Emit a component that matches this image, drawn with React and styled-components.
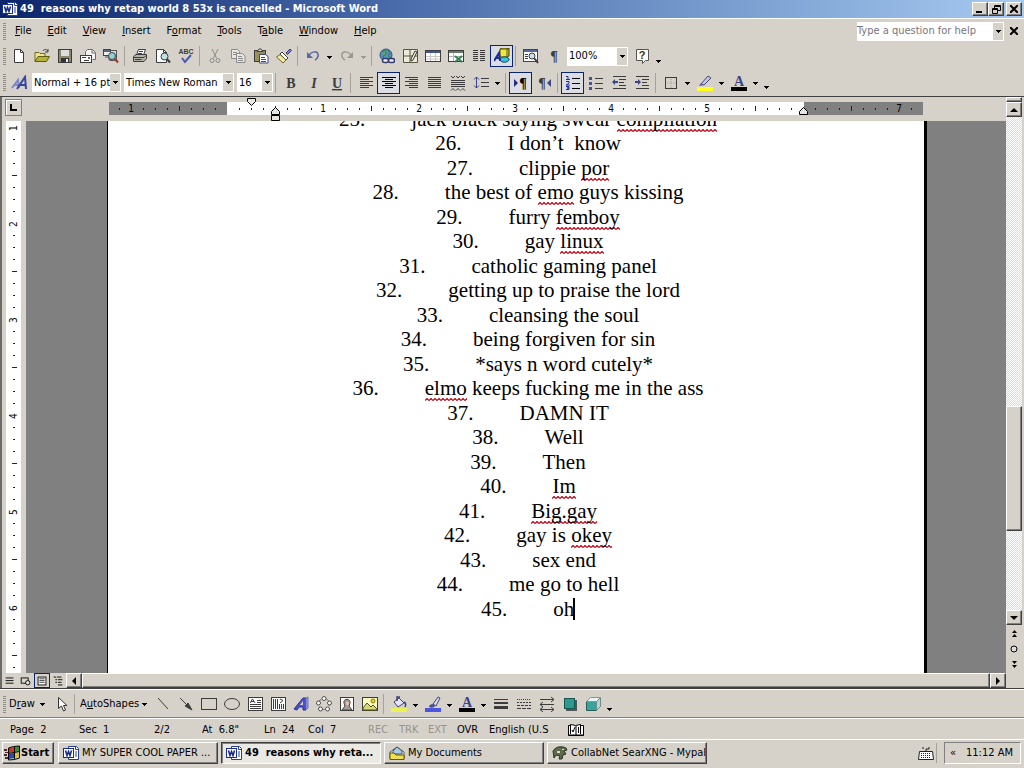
import React from "react";
import styled, { createGlobalStyle, css } from "styled-components";

const C = {
  face: "#d6d2ca",
  light: "#ffffff",
  shadow: "#808080",
  dark: "#404040",
  navy: "#0a246a",
};

const ui = `"DejaVu Sans Condensed", "Noto Sans", sans-serif`;

const Global = createGlobalStyle`
  * { box-sizing: border-box; }
  body { margin: 0; background: ${C.face}; }
  button, input, select { font: inherit; color: inherit; margin: 0; }
`;

const raised = css`
  border: 1px solid;
  border-color: ${C.light} ${C.dark} ${C.dark} ${C.light};
  box-shadow: inset -1px -1px 0 ${C.shadow};
`;

const Desktop = styled.div`
  height: 100vh;
  display: flex;
  flex-direction: column;
  background: ${C.face};
  color: #000;
  font: 11px/14px ${ui};
  overflow: hidden;
`;

const TitleBar = styled.header`
  display: flex;
  align-items: center;
  flex: none;
  height: 18px;
  padding: 0 2px;
  background: linear-gradient(90deg, #0a246a, #4466a6 35%, #7094c8 65%, #a6caf0);
  color: #fff;
`;

const Title = styled.h1`
  flex: 1;
  margin: 0 0 0 2px;
  font: bold 11px/16px ${ui};
  white-space: pre;
`;

const Caption = styled.button`
  ${raised}
  display: grid;
  place-items: center;
  width: 16px;
  height: 14px;
  margin-left: ${(p) => (p.$gap ? 2 : 0)}px;
  padding: 0;
  background: ${C.face};
`;

const Bar = styled.div`
  display: flex;
  align-items: center;
  flex: none;
  height: ${(p) => p.$h}px;
  padding: 0 2px;
  border-top: ${(p) => (p.$line ? "1px solid #fff" : "none")};
`;

const Grip = styled.span`
  flex: none;
  width: 3px;
  height: 17px;
  margin: 0 1px;
  background: repeating-linear-gradient(#8f8c84 0 1px, transparent 1px 2px);
`;

const MenuNav = styled.nav`
  display: flex;
  flex: 1;
`;

const MenuItem = styled.button`
  padding: 2px 8px;
  border: 0;
  background: none;
  white-space: nowrap;
`;

const CloseDocument = styled.button`
  display: grid;
  place-items: center;
  flex: none;
  width: 16px;
  height: 16px;
  padding: 0;
  border: 0;
  background: none;
`;

const Key = styled.span`
  text-decoration: underline;
  text-underline-offset: 1px;
`;

const Tool = styled.button`
  display: grid;
  place-items: center;
  flex: none;
  width: 23px;
  height: 22px;
  padding: 0;
  border: 1px solid ${(p) => (p.$on ? C.navy : "transparent")};
  background: ${(p) => (p.$on ? "#dcdce4" : "none")};
`;

const Arrow = styled.button`
  display: grid;
  place-items: center;
  flex: none;
  width: 11px;
  height: 22px;
  padding: ${(p) => (p.$low ? "10px 0 0" : "2px 0 0")};
  border: 0;
  background: none;
`;

const Sep = styled.span`
  flex: none;
  width: 1px;
  height: 20px;
  margin: 0 3px 0 2px;
  background: #a6a29a;
`;

const ComboBox = styled.span`
  display: flex;
  flex: none;
  position: relative;
  width: ${(p) => p.$w}px;
  height: 19px;
  margin: 0 ${(p) => p.$after || 0}px 0 ${(p) => p.$before || 0}px;
  background: #fff;
`;

const Select = styled.select`
  flex: 1;
  min-width: 0;
  padding: 0 8px 0 2px;
  border: 0;
  background: none;
  appearance: none;
  white-space: nowrap;
`;

const HelpInput = styled.input`
  flex: 1;
  min-width: 0;
  padding: 0;
  border: 0;
  background: none;
  &::placeholder { color: #77757c; opacity: 1; }
`;

const ComboArrow = styled.span`
  position: absolute;
  right: 1px;
  top: 1px;
  bottom: 1px;
  display: grid;
  place-items: center;
  width: 10px;
  background: ${C.face};
  pointer-events: none;
`;

const Workspace = styled.main`
  display: flex;
  flex: 1;
  min-height: 0;
  border-top: 1px solid ${C.dark};
  border-bottom: 1px solid ${C.dark};
`;

const Pane = styled.div`
  display: flex;
  flex-direction: column;
  flex: 1;
  min-width: 0;
  border-left: 2px solid #6c6a66;
`;

const RulerRow = styled.div`
  display: flex;
  flex: none;
  height: 24px;
`;

const TabCorner = styled.button`
  flex: none;
  width: 17px;
  height: 17px;
  margin: 2px 4px 0 3px;
  padding: 0;
  border: 1px solid ${C.shadow};
  box-shadow: inset 1px 1px 0 #fff;
  background: ${C.face};
`;

const RulerArea = styled.div`
  display: flex;
  justify-content: center;
  flex: 1;
  min-width: 0;
`;

const Ruler = styled.div`
  position: relative;
  display: flex;
  align-items: center;
  flex: none;
  width: 814px;
  height: 13px;
  margin-top: 5px;
  padding-left: 4px;
  background: linear-gradient(90deg, #808080 118px, #fff 118px 695px, #808080 695px);
`;

const VRuler = styled.div`
  display: flex;
  flex-direction: column;
  flex: none;
  width: 15px;
  margin: 0 5px 0 4px;
  padding-top: 1px;
  overflow: hidden;
  background: #fff;
`;

const Cell = styled.span`
  display: grid;
  place-items: center;
  flex: none;
  width: 12px;
  height: 12px;
  font-size: 10px;
  line-height: 12px;
  transform: ${(p) => (p.$v ? "rotate(-90deg)" : "none")};
  ${(p) => p.$v && "align-self: center;"}
  &::before {
    content: "";
    display: ${(p) => (p.$tick ? "block" : "none")};
    width: 1px;
    height: ${(p) => (p.$tick === "long" ? 5 : 2)}px;
    background: #222;
  }
`;

const Marker = styled.svg`
  position: absolute;
  left: ${(p) => p.$x}px;
  top: ${(p) => p.$y}px;
`;

const DocRow = styled.div`
  display: flex;
  flex: 1;
  min-height: 0;
`;

const Canvas = styled.div`
  display: flex;
  justify-content: center;
  flex: 1;
  min-width: 0;
  padding-left: 2px;
  overflow: hidden;
  background: #808080;
`;

const Page = styled.article`
  flex: none;
  width: 820px;
  border-left: 1px solid #000;
  border-right: 3px solid #000;
  background: #fff;
  overflow: hidden;
`;

const Reasons = styled.ol`
  margin: -14px 120px 0 144px;
  padding: 0;
  list-style: none;
  font: 21px/24px "Liberation Serif", "Times New Roman", serif;
`;

const Reason = styled.li`
  display: flex;
  justify-content: center;
  gap: 46px;
  height: 24px;
  white-space: pre;
  &:nth-child(even) { height: 25px; }
`;

const Misspelt = styled.span`
  padding-bottom: 1px;
  background: url("data:image/svg+xml,%3Csvg xmlns='http://www.w3.org/2000/svg' width='4' height='3'%3E%3Cpath d='M0 2.5 2 .5 4 2.5' fill='none' stroke='%23c00010' stroke-width='1.2'/%3E%3C/svg%3E") repeat-x left bottom;
`;

const Caret = styled.span`
  display: inline-block;
  width: 2px;
  height: 22px;
  margin-left: -1px;
  vertical-align: -4px;
  background: #000;
`;

const HScroll = styled.div`
  display: flex;
  align-items: center;
  flex: none;
  height: 15px;
`;

const View = styled.button`
  display: grid;
  place-items: center;
  flex: none;
  width: 16px;
  height: 15px;
  padding: 0;
  border: 1px solid ${(p) => (p.$on ? C.navy : "transparent")};
  background: none;
`;

const ScrollButton = styled.button`
  ${raised}
  display: grid;
  place-items: center;
  flex: none;
  width: 16px;
  height: 15px;
  padding: 0;
  background: ${C.face};
`;

const HThumb = styled.div`
  ${raised}
  flex: 1;
  height: 15px;
`;

const VScroll = styled.div`
  display: flex;
  flex-direction: column;
  flex: none;
  width: 18px;
  padding-right: 2px;
`;

const SplitBox = styled.div`
  ${raised}
  flex: none;
  height: 5px;
`;

const VTrack = styled.div`
  display: flex;
  flex-direction: column;
  flex: 1;
  background: repeating-conic-gradient(#fff 0 25%, #dedbd4 0 50%) 0 0 / 2px 2px;
`;

const Space = styled.div`
  flex: ${(p) => p.$n};
`;

const VThumb = styled.div`
  ${raised}
  flex: 123;
  background: ${C.face};
`;

const Browse = styled.button`
  display: grid;
  place-items: center;
  flex: none;
  height: 16px;
  padding: 0;
  border: 0;
  background: none;
`;

const BrowseGroup = styled.div`
  display: flex;
  flex-direction: column;
  flex: none;
  height: 63px;
`;

const DrawMenu = styled.button`
  display: flex;
  align-items: center;
  justify-content: space-between;
  flex: none;
  width: ${(p) => p.$w}px;
  height: 22px;
  padding: 0 4px 0 2px;
  border: 0;
  background: none;
  white-space: nowrap;
`;

const Status = styled.footer`
  display: flex;
  align-items: center;
  flex: none;
  height: 21px;
  padding: 1px 0 0 10px;
  border-top: 1px solid #fff;
  box-shadow: 0 -1px 0 ${C.shadow};
`;

const Field = styled.span`
  flex: none;
  width: ${(p) => p.$w}px;
  color: ${(p) => (p.$off ? "#96938c" : "#000")};
  white-space: pre;
  overflow: hidden;
`;

const Taskbar = styled.footer`
  display: flex;
  align-items: center;
  flex: none;
  height: 29px;
  padding: 0 3px 2px 2px;
  border-top: 1px solid #fff;
`;

const Start = styled.button`
  ${raised}
  display: flex;
  align-items: center;
  gap: 1px;
  flex: none;
  width: 52px;
  height: 22px;
  margin-right: 4px;
  padding: 0 0 0 1px;
  background: ${C.face};
  font-weight: bold;
`;

const Task = styled.button`
  ${raised}
  display: flex;
  align-items: center;
  gap: 3px;
  flex: 0 1 160px;
  min-width: 0;
  height: 22px;
  margin-right: 3px;
  padding: 0 0 0 4px;
  background: ${C.face};
  white-space: pre;
  ${(p) =>
    p.$on &&
    css`
      border-color: ${C.dark} #fff #fff ${C.dark};
      box-shadow: inset 1px 1px 0 ${C.shadow};
      background: #ebe9e4;
      font-weight: bold;
    `}
`;

const TaskText = styled.span`
  overflow: hidden;
  white-space: pre;
`;

const Tray = styled.div`
  display: flex;
  align-items: center;
  justify-content: space-between;
  flex: none;
  width: 77px;
  height: 22px;
  margin-left: 4px;
  padding: 0 7px 0 5px;
  border: 1px solid;
  border-color: ${C.shadow} #fff #fff ${C.shadow};
`;

const Fill = styled.span`
  flex: 1;
`;

const Down = ({ c = "#000" }) => (
  <svg width="5" height="3" aria-hidden="true" shapeRendering="crispEdges">
    <path d="M0 0h5v1h-1v1h-1v1h-1v-1h-1v-1h-1z" fill={c} />
  </svg>
);

const Cross = () => (
  <svg width="8" height="8" stroke="#000" strokeWidth="2" aria-hidden="true">
    <path d="m0 0 8 8M8 0 0 8" />
  </svg>
);

const Tri = ({ d }) => (
  <svg width="8" height="8" aria-hidden="true">
    <path d={{ up: "M0 6 4 2 8 6z", down: "M0 2h8L4 6z", left: "M6 0v8L2 4z", right: "M2 0v8l4-4z" }[d]} />
  </svg>
);

const K = "#3c3c3c";
const lines = (rows, c = K) => (
  <path d={rows.map(([x, y, w]) => `M${x} ${y}.5h${w}`).join("")} stroke={c} />
);
const serif = { fontFamily: "Liberation Serif, serif", fontWeight: 700 };
const glyph = (t, extra = {}) => (
  <text x="8" y="13" textAnchor="middle" fontSize="14" fill={K} style={{ ...serif, ...extra }}>{t}</text>
);

const art = {
  word: <><path d="M5.500 1.500h8l2 2v11h-10z" fill="#fff" stroke="#26408f" /><path d="M12.500 1.500v3h3M12 7h2M12 9h2M12 11h2" stroke="#26408f" fill="none" /><rect x="0.500" y="3.500" width="10" height="9" fill="#fff" stroke="#1a2c8c" /><path d="M2.500 5.500 4 10.500 5.500 6.500 7 10.500 8.500 5.500" fill="none" stroke="#1a2c8c" strokeWidth="1.600" /></>,
  new: <><path d="M3.500 1.500h6l3 3v10h-9z" fill="#fff" stroke={K} /><path d="M9.500 1.500v3h3" fill="none" stroke={K} /></>,
  open: <><path d="M1 13.500V4.500h4l1 1h5v3" fill="#f0e68c" stroke="#6b6b18" /><path d="M1 13.500 4 8.500h11.500l-3 5z" fill="#b5b23a" stroke="#5c5c12" /><path d="M9 3c1-2 3-2 5 0m0-2v3h-3" fill="none" stroke={K} /></>,
  save: <><rect x="1.500" y="1.500" width="13" height="13" fill="#8a8a6a" stroke={K} /><rect x="4" y="2" width="8" height="6" fill="#dedede" /><rect x="4" y="10" width="8" height="4" fill="#333" /><rect x="9" y="11" width="2" height="3" fill="#eee" /></>,
  mail: <><path d="M5.500 7.500v-4l2-2h5l3 3v7h-3" fill="#f4f4f4" stroke="#6c6c6c" /><path d="M12 2v3h3" fill="none" stroke="#6c6c6c" /><rect x="0.500" y="7.500" width="11" height="7" fill="#fff" stroke={K} />{lines([[2, 9, 4], [4, 12, 5]])}<rect x="8" y="9" width="2" height="2" fill="#666" /></>,
  search: <><rect x="0.500" y="1.500" width="7" height="6" fill="#eee" stroke="#444" /><path d="M1 2h6v2H1z" fill="#567" /><rect x="7.500" y="2.500" width="6" height="10" fill="#cdd" stroke="#555" /><path d="M2 9h4v3h3" fill="none" stroke="#555" /><circle cx="9" cy="8" r="3.500" fill="#8fd0d4" stroke="#444" /><path d="m11.500 10.500 3.500 4" stroke="#b03030" strokeWidth="2" /></>,
  print: <><path d="M4.500 7 6.500 1.500h7L11.500 7" fill="#fff" stroke={K} />{lines([[7, 3, 4], [6, 5, 4]])}<path d="M1.500 8.500 4 6.500h10.500v4l-2.500 3H1.500z" fill="#b4b2aa" stroke={K} /><path d="M2 9.500h10l2-2M3 11.500h7" fill="none" stroke={K} /><path d="M9 11h2v1H9z" fill="#9a9a20" /></>,
  preview: <><path d="M1.500 1.500h7l3 3v10h-10z" fill="#fff" stroke={K} /><path d="M8.500 1.500v3h3" fill="none" stroke={K} /><circle cx="9.500" cy="8.500" r="3.500" fill="#bfe0e4" stroke={K} /><path d="m12 11 3 3.500" stroke={K} strokeWidth="2" /></>,
  spell: <><text x="8" y="6" fontSize="7" textAnchor="middle" fill={K} fontFamily="Liberation Sans, sans-serif" fontWeight="700">ABC</text><path d="m4 10 3 4 6-7" fill="none" stroke="#4a58b0" strokeWidth="2" /></>,
  cut: <g fill="none" stroke="#8b8b8b"><path d="m5 1 4.500 9M11 1 6.500 10" /><circle cx="5" cy="12.500" r="2" /><circle cx="11" cy="12.500" r="2" /></g>,
  copy: <g fill="#e8e6e0" stroke="#8b8b8b"><path d="M1.500 1.500h6l2 2v7h-8z" /><path d="M6.500 5.500h6l2.500 2.500v6.500H6.500z" />{lines([[3, 4, 4], [3, 6, 3], [8, 8, 4], [8, 10, 5], [8, 12, 5]], "#8b8b8b")}</g>,
  paste: <><rect x="1.500" y="2.500" width="11" height="11" fill="#98925a" stroke={K} /><path d="M4 3.500 6 1h2l2 2.500z" fill="#ddd" stroke={K} /><path d="M6.500 6.500h6l2.500 2v6.500H6.500z" fill="#fff" stroke="#3a4684" />{lines([[8, 9, 4], [8, 11, 5], [8, 13, 5]], "#3a4684")}</>,
  brush: <><path d="m10 5 4-4 1.500 1.500-4 4z" fill="#7b7be0" stroke="#3a3a6a" /><path d="m6 4 6 6-2 2-6-6z" fill="#fff" stroke={K} /><path d="M4 6.500 10 12 7 15 .5 9z" fill="#f2e9a8" stroke="#6e6420" /></>,
  undo: <><path d="M4 7c3-4 8-4 9-1 1 2-1 5-3 6" fill="none" stroke="#5a66a6" strokeWidth="1.500" /><path d="M2 4v6h6z" fill="#5a66a6" /></>,
  redo: <><path d="M12 7C9 3 4 3 3 6c-1 2 1 5 3 6" fill="none" stroke="#9a9892" strokeWidth="1.500" /><path d="M14 4v6H8z" fill="#9a9892" /></>,
  link: <><circle cx="7" cy="7" r="6" fill="#5a8fc4" stroke="#34507c" /><path d="M3 4c3-3 5 0 4 2s-3 1-3 3l2 3M9 2l2 3-2 3 3 2" fill="#58a868" stroke="#2f7a48" /><rect x="3.500" y="10.500" width="6" height="4" rx="2" fill="#eee" stroke="#333a70" strokeWidth="1.500" /><rect x="9.500" y="10.500" width="6" height="4" rx="2" fill="#eee" stroke="#333a70" strokeWidth="1.500" /></>,
  borders: <><path d="M1.500 1.500h14v13h-14zM1 8h14M8 2v12" fill="#ecead8" stroke="#55553c" /><path d="m9 11 4-8 2 1-4 8-2 1z" fill="#f4f0d0" stroke="#333" /></>,
  table: <><rect x="0.500" y="2.500" width="15" height="11" fill="#fff" stroke={K} /><path d="M1 3h14v2H1z" fill="#3c55a0" /><path d="M1 8.500h14M1 11h14M5.500 5v8M10.500 5v8" stroke="#c8c8c8" /></>,
  excel: <><rect x="0.500" y="2.500" width="15" height="11" fill="#fff" stroke={K} /><path d="M1 3h14v2H1z" fill="#687a68" /><path d="M1 8.500h14M5.500 5v8" stroke="#b4b4b4" /><path d="m7 8 7 6M14 8l-7 6" stroke="#2f8050" strokeWidth="2" /></>,
  columns: lines([[2, 2, 5], [9, 2, 5], [2, 4, 5], [9, 4, 5], [2, 6, 5], [9, 6, 5], [2, 8, 5], [9, 8, 5], [2, 10, 5], [9, 10, 5], [2, 12, 5], [9, 12, 5]]),
  drawing: <><path d="M6 1h7v8H6z" fill="#f0e840" stroke="#4c4c10" /><path d="M6 1 8 0h7l-2 1M13 1l2-1v8l-2 1" fill="#a8a020" stroke="#4c4c10" /><path d="M6 12c0-4 8-4 9-1s-7 5-9 1z" fill="#38c4cc" stroke="#146" /><path d="m0 13 5-8 1 8M2 10h4" fill="none" stroke="#1c2c9c" strokeWidth="2" /></>,
  docmap: <><rect x="0.500" y="1.500" width="14" height="12" fill="#fff" stroke="#35407c" /><path d="M1 2h13v2H1z" fill="#58689c" />{lines([[2, 6, 3], [2, 8, 3], [2, 10, 3]])}<circle cx="9" cy="8" r="3" fill="#cde" stroke={K} /><path d="m11 10 4 5" stroke={K} strokeWidth="2" /></>,
  pilcrow: glyph("¶"),
  help: <><path d="M2.500 1.500h12v11h-3l-3 3v-3h-6z" fill="#fffff0" stroke="#555" /><text x="8" y="11" textAnchor="middle" fontSize="11" fontWeight="700" fill="#333" fontFamily="Liberation Sans, sans-serif">?</text></>,
  styles: <g fill="none" strokeWidth="2"><path d="m1 13 6-8 1 8M4 10h4" stroke="#7a86c8" /><path d="m6 14 8-12 1 12M9 10h6" stroke="#3643a0" /></g>,
  bold: glyph("B"),
  italic: glyph("I", { fontStyle: "italic" }),
  underline: glyph("U", { textDecoration: "underline" }),
  left: lines([[2, 2, 13], [2, 4, 9], [2, 6, 13], [2, 8, 9], [2, 10, 13], [2, 12, 9]]),
  center: lines([[1, 2, 14], [4, 4, 8], [1, 6, 14], [4, 8, 8], [1, 10, 14], [4, 12, 8]], "#000"),
  right: lines([[1, 2, 13], [5, 4, 9], [1, 6, 13], [5, 8, 9], [1, 10, 13], [5, 12, 9]]),
  justify: lines([[1, 2, 13], [1, 4, 13], [1, 6, 13], [1, 8, 13], [1, 10, 13], [1, 12, 13]]),
  distribute: <>{lines([[1, 5, 14], [1, 7, 14], [1, 9, 14], [1, 11, 14]])}<path d="m1 1 2 2 2-2m1 0 2 2 2-2m1 0 2 2 2-2M1 15.500l2-2 2 2m1 0 2-2 2 2m1 0 2-2 2 2" fill="none" stroke={K} /></>,
  spacing: <>{lines([[8, 3, 8], [8, 7, 8], [8, 11, 8]])}<path d="M3.500 2v11M1 4.500 3.500 2 6 4.500M1 10.500 3.500 13 6 10.500" fill="none" stroke="#3a4684" /></>,
  ltr: <><path d="m1 4 4 4-4 4z" fill="#1c2c80" /><text x="10" y="13" textAnchor="middle" fontSize="14" style={serif}>¶</text></>,
  rtl: <><path d="m15 4-4 4 4 4z" fill="#3a4684" /><text x="6" y="13" textAnchor="middle" fontSize="14" fill={K} style={serif}>¶</text></>,
  numbering: <>{lines([[7, 3, 8], [7, 8, 8], [7, 13, 8]], "#000")}<path d="M1 1.500h2v3M1 4.500h4M1 6.500h3v1.500L1 10h4M1 11.500h3v1.500H2h2v1.500H1" fill="none" stroke="#1c2c9c" /></>,
  bullets: <>{lines([[7, 3, 8], [7, 8, 8], [7, 13, 8]])}<path d="M1 2h3v3H1zM1 7h3v3H1zM1 12h3v3H1z" fill="#4450a0" /></>,
  outdent: <>{lines([[2, 1, 13], [8, 4, 7], [8, 7, 5], [8, 10, 7], [2, 13, 13]])}<path d="M1 7 4 4v2h3v2H4v2z" fill="#3a4684" /></>,
  indent: <>{lines([[2, 1, 13], [8, 4, 7], [8, 7, 5], [8, 10, 7], [2, 13, 13]])}<path d="M7 7 4 4v2H1v2h3v2z" fill="#3a4684" /></>,
  border: <><rect x="2.500" y="2.500" width="11" height="11" fill="none" stroke={K} /><path d="M8 4v9M4 8h9" stroke="#a4a29c" strokeDasharray="1 1" /></>,
  highlight: <><path d="m4 9 7-8 3 2-7 7z" fill="#c4c8e8" stroke="#44486a" /><path d="m4 8-2 3 5-1z" fill="#555a9c" /><path d="M0 12h16v4H0z" fill="#ffff20" /></>,
  fontColor: <><text x="8" y="11" textAnchor="middle" fontSize="14" fill="#3b4487" style={serif}>A</text><path d="M0 12h16v4H0z" /></>,
  pointer: <path d="M5.500 1.500v11l3-2.500 2 5 2-1-2-4.500h3.500z" fill="#fff" stroke="#333" />,
  line: <path d="m3 2 10 11" stroke={K} />,
  arrow: <path d="m2 2 8 8M14 14 7 10l3-3z" fill={K} stroke={K} />,
  rect: <rect x="0.500" y="2.500" width="15" height="11" fill="none" stroke={K} />,
  oval: <ellipse cx="8" cy="8" rx="7.500" ry="5.500" fill="none" stroke={K} />,
  textbox: <><rect x="1.500" y="1.500" width="14" height="13" fill="#fff" stroke={K} />{lines([[10, 4, 4], [10, 6, 4], [3, 8, 11], [3, 10, 11], [3, 12, 11]])}<path d="m3 7 2.500-4L8 7M4 5.500h3" fill="none" stroke={K} /></>,
  vtext: <><rect x="1.500" y="1.500" width="14" height="13" fill="#fff" stroke={K} /><path d="M3.500 3v10M5.500 3v10M7.500 3v10M9.500 8v5M11.500 8v5M13.500 8v5M10 3l3 1.500L10 7" fill="none" stroke={K} /></>,
  wordart: <><path d="m1 13 9-11h3v12h-3v-3H6l-2 3z" fill="#4a50c8" stroke="#2c3190" /><path d="M7 9h3V5z" fill="#d6d2ca" /><path d="m13 14 2-2V1l-2 1z" fill="#9aa0e8" stroke="#6a70b8" /></>,
  diagram: <g fill="#fff" stroke="#4c4c4c"><circle cx="8" cy="8" r="5.500" fill="none" strokeDasharray="2 2" /><circle cx="8" cy="2.500" r="2" /><circle cx="2.500" cy="7" r="2" /><circle cx="13.500" cy="7" r="2" /><circle cx="4.500" cy="13" r="2" /><circle cx="11.500" cy="13" r="2" /></g>,
  clip: <><rect x="1.500" y="1.500" width="13" height="13" fill="#fff" stroke={K} /><path d="M5 7c-1-5 7-5 6 0l-1 3 3 4H3l3-4z" fill="#a8a094" stroke="#444" /><path d="M7 6h3v3H7z" fill="#e8c0b0" /></>,
  picture: <><rect x="0.500" y="1.500" width="15" height="13" fill="#fafac0" stroke={K} /><circle cx="11" cy="5" r="2" fill="#e8d820" stroke="#887a10" /><path d="m1 12 4-5 4 4 2-2 4 4v1H1z" fill="#d8d878" stroke="#55551a" /></>,
  fill: <><path d="m3 6 5-4 5 5-6 4z" fill="#e6e6f4" stroke="#3b3f78" /><path d="M6 5V1h3M13 6c2 1 2 3 1 5" fill="none" stroke="#3b3f78" strokeWidth="1.500" /><path d="M0 12h16v4H0z" fill="#eef250" /></>,
  lineColor: <><path d="m8 8 5-7 2 1-4 8z" fill="#dcdcee" stroke="#44486a" /><path d="M4 11c0-2 2-3 4-3l2 2c-1 2-4 2-6 1z" fill="#4a4e90" /><path d="M0 12h16v4H0z" fill="#4a55e0" /></>,
  lineStyle: <><path d="M1 3.500h14" stroke={K} /><path d="M1 7h14" stroke={K} strokeWidth="2" /><path d="M1 11.500h14" stroke={K} strokeWidth="3" /></>,
  dash: <g stroke={K}><path d="M1 3.500h14" strokeDasharray="1 1" /><path d="M1 6.500h14" strokeDasharray="2 1" /><path d="M1 9.500h14" strokeDasharray="3 1" /><path d="M1 12.500h14" strokeDasharray="4 1" /></g>,
  arrowStyle: <path d="M1 3.500h14M1 8.500h14M1 13.500h14M12 1l3 2.500L12 6M4 6 1 8.500 4 11M12 11l3 2.500-3 2.500M4 11l-3 2.500L4 16" fill="none" stroke={K} />,
  shadow: <><rect x="4" y="4" width="11" height="11" fill="#555" /><rect x="2.500" y="2.500" width="10" height="10" fill="#2d9a92" stroke="#175650" /></>,
  cube: <><path d="M1.500 5.500h10v9h-10z" fill="#3aa49c" stroke="#245c58" /><path d="m1.500 5.500 4-4h10l-4 4z" fill="#e6f4f2" stroke="#7b9c9a" /><path d="m11.500 5.500 4-4v9l-4 4z" fill="#b8d0ce" stroke="#6b8c8a" /></>,
  book: <><path d="M.500 3.500h2v-1l5 1 5-1v1h3v10H.500z" fill="#fff" stroke="#000" /><path d="M.500 13h15M8 4v9M2.500 3v9M12.500 3v9M10.500 5v6" stroke="#000" /><path d="m4 8 1 2 2-5" fill="none" stroke="#000" /></>,
  windows: <><path d="m5 3 5-1v5L5 8z" fill="#c33a28" /><path d="m11 2 4-1v5l-4 1z" fill="#3a8c3c" /><path d="m5 9 5-1v5l-5 1z" fill="#2c48a4" /><path d="m11 8 4-1v5l-4 1z" fill="#d8c030" /><path d="M15.500 1v12l-5 1.500L4.500 15V3l5-1.500 6-.500M4.500 8.500l11-2M10.500 2v12" fill="none" stroke="#000" /><path d="M0 4h3v2H0zM1 7h3v1H1zM0 9h3v2H0zM1 12h3v2H1z" fill="#5a2434" /></>,
  folder: <><path d="m1 7 7-5 7 5v7H1z" fill="#fff" stroke="#555" /><path d="m4 6 4-4 5 4v3H4z" fill="#a8cce8" stroke="#456" /><path d="M1 8h4l2 2h8v4.500H1z" fill="#f0e24c" stroke="#5c5610" /></>,
  mypal: <><path d="M1 6c3-5 9-5 13-3l1 2-3 1 2 3-3 1-1 4H7l1-3-4-1-2 3z" fill="#5d6b4c" stroke="#2c3424" /><path d="M5 6h3v2H5zM10 4h2v1h-2z" fill="#d8dcc4" /></>,
  keyboard: <><path d="M1.500 6.500h13l1 8H.500z" fill="#fff" stroke="#222" /><path d="M3 8.500h10M3 10.500h10M3 12.500h10" stroke="#222" strokeDasharray="1 1" /><path d="M8 6V4h3V2M5 2v2" fill="none" stroke="#222" /></>,
  viewNormal: lines([[3, 4, 9], [3, 7, 9], [3, 10, 9]], "#000"),
  viewWeb: <><rect x="2.500" y="4.500" width="8" height="6" fill="none" stroke="#000" /><circle cx="10" cy="10" r="2.500" fill="#ddd" stroke="#000" /></>,
  viewPrint: <><rect x="3.500" y="3.500" width="9" height="9" fill="#fff" stroke="#000" />{lines([[5, 5, 6], [5, 7, 6], [5, 9, 6]], "#333")}</>,
  viewOutline: lines([[3, 3, 3], [7, 3, 5], [5, 6, 2], [8, 6, 5], [5, 9, 2], [8, 9, 4], [8, 12, 5]], "#000"),
};

const Icon = ({ n, s = 16 }) => (
  <svg width={s} height={s} viewBox="0 0 16 16" fill="none" aria-hidden="true" style={{ flex: "none" }}>
    <g fill="#000">{art[n]}</g>
  </svg>
);

const Tools = ({ items }) =>
  items.map((it, i) => {
    if (it === "|") return <Sep key={i} />;
    if (it === "v") return <Arrow key={i} aria-label="More choices"><Down /></Arrow>;
    if (it === "V") return <Arrow key={i} aria-label="More choices"><Down c="#9a9892" /></Arrow>;
    if (it === "more") return <Arrow key={i} $low aria-label="Toolbar options"><Down /></Arrow>;
    const on = it.startsWith("*");
    const n = on ? it.slice(1) : it;
    return <Tool key={i} $on={on} aria-pressed={on} aria-label={n}><Icon n={n} /></Tool>;
  });

const Combo = ({ label, value, ...rest }) => (
  <ComboBox {...rest}>
    <Select aria-label={label} defaultValue={value}><option>{value}</option></Select>
    <ComboArrow><Down /></ComboArrow>
  </ComboBox>
);

const menus = [["", "F", "ile"], ["", "E", "dit"], ["", "V", "iew"], ["", "I", "nsert"], ["F", "o", "rmat"], ["", "T", "ools"], ["T", "a", "ble"], ["", "W", "indow"], ["", "H", "elp"]];

const reasons = [
  "jack black saying swear ~compilation~", "I don’t  know", "clippie ~por~", "the best of ~emo~ guys kissing",
  "furry ~femboy~", "gay ~linux~", "catholic gaming panel", "getting up to praise the lord",
  "cleansing the soul", "being forgiven for sin", "*says n word cutely*", "~elmo~ keeps fucking me in the ass",
  "DAMN IT", "Well", "Then", "~Im~", "~Big.gay~", "gay is ~okey~", "sex end", "me go to hell", "oh",
];

// One cell every eighth of an inch; the left margin of the page is inch zero.
const hCells = Array.from({ length: 67 }, (_, i) => {
  const k = i - 9;
  if (k % 8 === 0) return k === 0 || k === 48 ? "" : String(Math.abs(k / 8));
  return k % 4 === 0 ? "long" : "short";
});

const vCells = Array.from({ length: 46 }, (_, i) =>
  i % 8 === 0 ? String(i / 8 + 1) : i % 4 === 0 ? "long" : "short"
);

const RulerCells = ({ cells, v }) =>
  cells.map((c, i) => {
    const tick = c === "long" || c === "short" ? c : undefined;
    return <Cell key={i} $tick={tick} $v={v}>{tick ? null : c}</Cell>;
  });

const status = [["Page  2", 69], ["Sec  1", 75], ["2/2", 48], ['At  6.8"', 62], ["Ln  24", 44], ["Col  7", 60], ["REC", 31, 1], ["TRK", 29, 1], ["EXT", 29, 1], ["OVR", 32], ["English (U.S", 79]];

export default function App() {
  return (
    <Desktop>
      <Global />
      <TitleBar>
        <Icon n="word" />
        <Title>49  reasons why retap world 8 53x is cancelled - Microsoft Word</Title>
        <Caption aria-label="Minimize"><svg width="8" height="8"><path d="M0 6h6v2H0z" /></svg></Caption>
        <Caption aria-label="Restore"><svg width="9" height="9" fill="none" stroke="#000"><path d="M2.500 3V.500h6v5H6M2 1.500h7M.500 3.500h5v5h-5zM0 4.500h6" /></svg></Caption>
        <Caption $gap aria-label="Close"><Cross /></Caption>
      </TitleBar>
      <Bar $h={25} $line>
        <Grip />
        <MenuNav>
          {menus.map(([a, k, b]) => <MenuItem key={a + k + b}>{a}<Key>{k}</Key>{b}</MenuItem>)}
        </MenuNav>
        <ComboBox $w={147} $after={2}>
          <HelpInput aria-label="Type a question for help" placeholder="Type a question for help" />
          <ComboArrow><Down /></ComboArrow>
        </ComboBox>
        <CloseDocument aria-label="Close document"><Cross /></CloseDocument>
      </Bar>
      <Bar $h={26}>
        <Grip />
        <Tools items={["new", "open", "save", "mail", "search", "|", "print", "preview", "spell", "|", "cut", "copy", "paste", "brush", "|", "undo", "v", "redo", "V", "|", "link", "borders", "table", "excel", "columns", "*drawing", "|", "docmap", "pilcrow"]} />
        <Combo label="Zoom" value="100%" $w={61} $before={2} $after={2} />
        <Tools items={["help", "more"]} />
      </Bar>
      <Bar $h={27}>
        <Grip />
        <Tools items={["styles"]} />
        <Combo label="Style" value="Normal + 16 pt" $w={89} $before={2} />
        <Combo label="Font" value="Times New Roman" $w={110} $before={3} />
        <Combo label="Font size" value="16" $w={36} $before={3} />
        <Tools items={["|", "bold", "italic", "underline", "|", "left", "*center", "right", "justify", "distribute", "spacing", "v", "|", "*ltr", "rtl", "|", "*numbering", "bullets", "outdent", "indent", "|", "border", "v", "highlight", "v", "fontColor", "v", "more"]} />
      </Bar>
      <Workspace>
        <Pane>
          <RulerRow>
            <TabCorner aria-label="Tab type"><svg width="15" height="15"><path d="M5 4v6h6" fill="none" stroke="#000" strokeWidth="2" /></svg></TabCorner>
            <RulerArea>
              <Ruler>
                <RulerCells cells={hCells} />
                <Marker $x={137} $y={-5} width="11" height="10"><path d="M1.500 1.500h8v3l-4 4-4-4z" fill="#e8e6e0" stroke="#000" /></Marker>
                <Marker $x={161} $y={4} width="11" height="16"><path d="M1.500 8.500v-3l4-4 4 4v3z" fill="#e8e6e0" stroke="#000" /><path d="M1.500 9.500h8v5h-8z" fill="#e8e6e0" stroke="#000" /></Marker>
                <Marker $x={689} $y={4} width="11" height="10"><path d="M1.500 8.500v-3l4-4 4 4v3z" fill="#e8e6e0" stroke="#000" /></Marker>
              </Ruler>
            </RulerArea>
          </RulerRow>
          <DocRow>
            <VRuler><RulerCells cells={vCells} v /></VRuler>
            <Canvas>
              <Page>
                <Reasons start={25}>
                  {reasons.map((r, i) => (
                    <Reason key={i}>
                      <span>{25 + i}.</span>
                      <span>
                        {r.split("~").map((t, j) => (j % 2 ? <Misspelt key={j}>{t}</Misspelt> : t))}
                        {i === reasons.length - 1 && <Caret />}
                      </span>
                    </Reason>
                  ))}
                </Reasons>
              </Page>
            </Canvas>
          </DocRow>
          <HScroll>
            {["viewNormal", "viewWeb", "*viewPrint", "viewOutline"].map((v) => {
              const on = v[0] === "*";
              const n = v.replace("*", "");
              return <View key={n} $on={on} aria-label={n}><Icon n={n} s={14} /></View>;
            })}
            <ScrollButton aria-label="Scroll left"><Tri d="left" /></ScrollButton>
            <HThumb />
            <ScrollButton aria-label="Scroll right"><Tri d="right" /></ScrollButton>
          </HScroll>
        </Pane>
        <VScroll>
          <SplitBox />
          <ScrollButton aria-label="Scroll up"><Tri d="up" /></ScrollButton>
          <VTrack><Space $n={290} /><VThumb /><Space $n={79} /></VTrack>
          <ScrollButton aria-label="Scroll down"><Tri d="down" /></ScrollButton>
          <BrowseGroup>
            <Browse aria-label="Previous page"><svg width="7" height="8"><path d="m1 4 2.500-3L6 4zm0 4 2.500-3L6 8z" /></svg></Browse>
            <Browse aria-label="Select browse object"><svg width="8" height="8"><circle cx="4" cy="4" r="3" fill="#ddd" stroke="#000" /></svg></Browse>
            <Browse aria-label="Next page"><svg width="7" height="8"><path d="m1 0 2.500 3L6 0zm0 4 2.500 3L6 4z" /></svg></Browse>
          </BrowseGroup>
        </VScroll>
      </Workspace>
      <Bar $h={29} $line>
        <Grip />
        <DrawMenu $w={42}><span>D<Key>r</Key>aw</span><Down /></DrawMenu>
        <Tools items={["pointer", "|"]} />
        <DrawMenu $w={73}><span>A<Key>u</Key>toShapes</span><Down /></DrawMenu>
        <Tools items={["line", "arrow", "rect", "oval", "textbox", "vtext", "wordart", "diagram", "clip", "picture", "|", "fill", "v", "lineColor", "v", "fontColor", "v", "lineStyle", "dash", "arrowStyle", "shadow", "cube", "more"]} />
      </Bar>
      <Status>
        {status.map(([t, w, off]) => <Field key={t} $w={w} $off={off}>{t}</Field>)}
        <Icon n="book" />
      </Status>
      <Taskbar>
        <Start><Icon n="windows" />Start</Start>
        <Task><Icon n="word" /><TaskText>MY SUPER COOL PAPER ...</TaskText></Task>
        <Task $on><Icon n="word" /><TaskText>49  reasons why reta...</TaskText></Task>
        <Task><Icon n="folder" /><TaskText>My Documents</TaskText></Task>
        <Task><Icon n="mypal" /><TaskText>CollabNet SearXNG - Mypal</TaskText></Task>
        <Fill />
        <Icon n="keyboard" />
        <Sep />
        <Tray><span>«</span><time>11:12 AM</time></Tray>
      </Taskbar>
    </Desktop>
  );
}
